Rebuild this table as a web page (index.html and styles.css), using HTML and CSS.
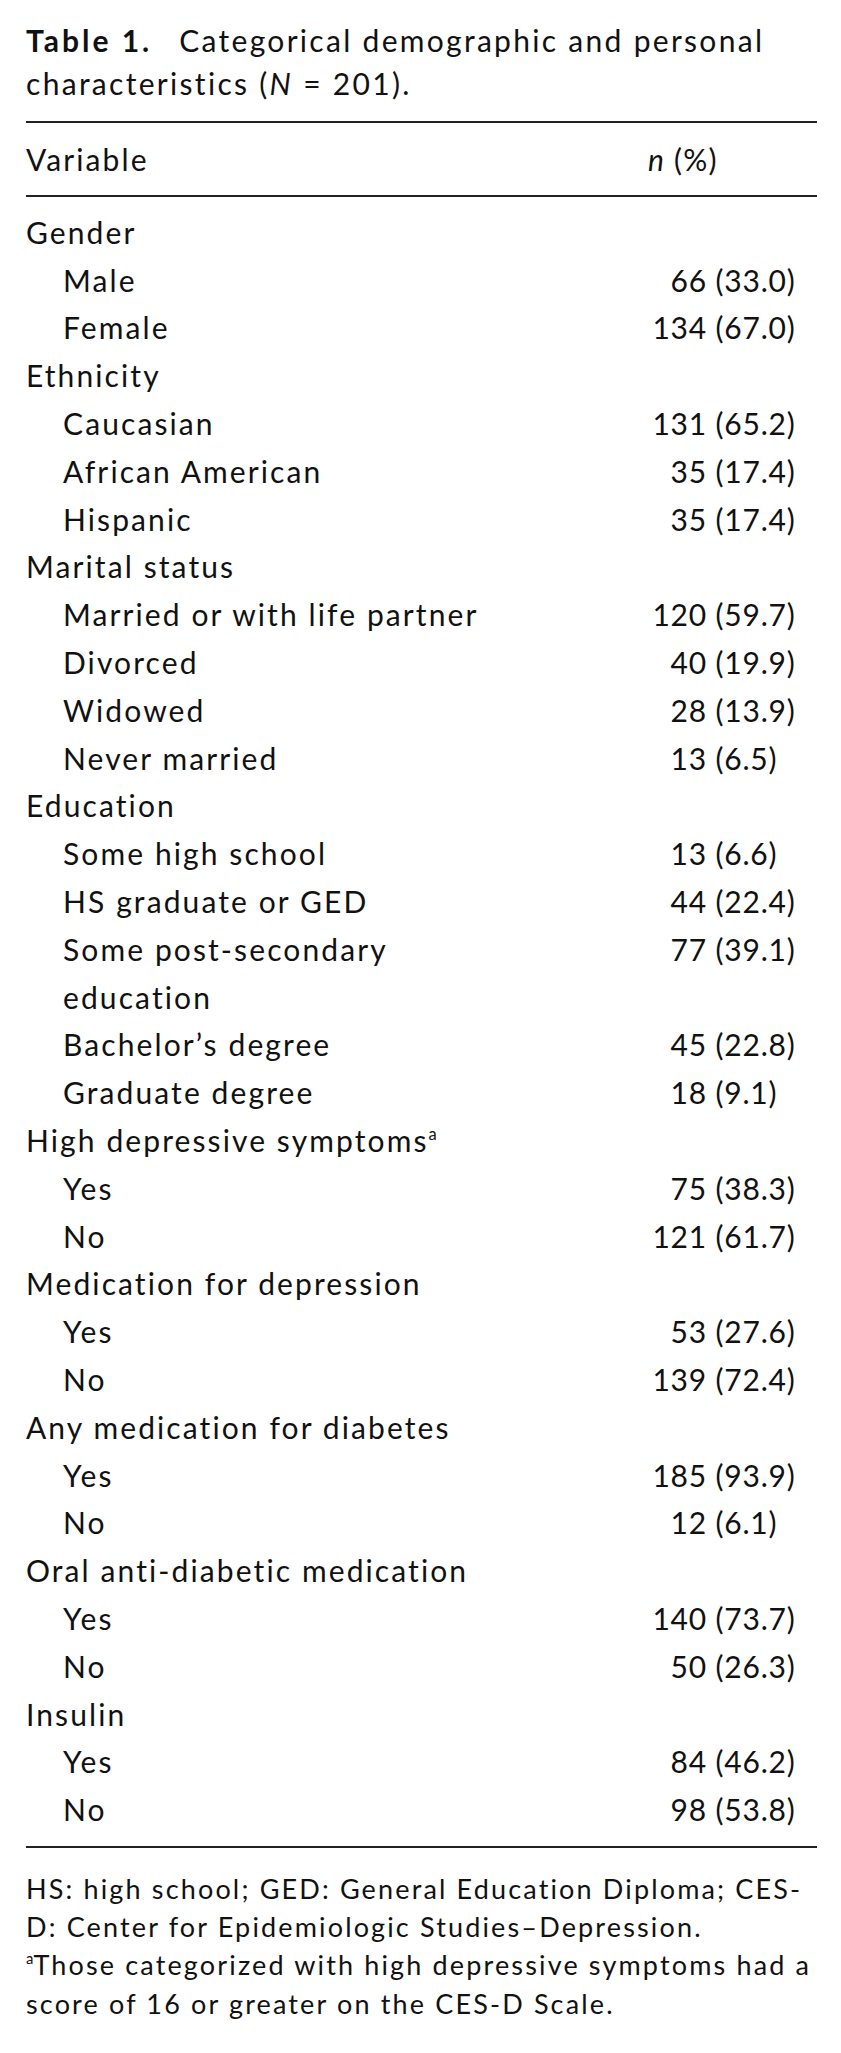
FILE: index.html
```html
<!DOCTYPE html>
<html lang="en">
<head>
<meta charset="utf-8">
<title>Table 1</title>
<link rel="stylesheet" href="styles.css">
</head>
<body>
<main class="page">
  <h1 class="caption"><span class="label">Table 1.</span>&nbsp; Categorical demographic and personal<br>characteristics (<i>N</i> = 201).</h1>
  <table class="data">
    <thead>
      <tr><th class="var">Variable</th><th class="head-val"><i>n</i> (%)</th></tr>
    </thead>
    <tbody>
      <tr><td class="group">Gender</td><td></td></tr>
      <tr><td class="item">Male</td><td class="val"><span class="n">66</span> <span class="pct">(33.0)</span></td></tr>
      <tr><td class="item">Female</td><td class="val"><span class="n">134</span> <span class="pct">(67.0)</span></td></tr>
      <tr><td class="group">Ethnicity</td><td></td></tr>
      <tr><td class="item">Caucasian</td><td class="val"><span class="n">131</span> <span class="pct">(65.2)</span></td></tr>
      <tr><td class="item">African American</td><td class="val"><span class="n">35</span> <span class="pct">(17.4)</span></td></tr>
      <tr><td class="item">Hispanic</td><td class="val"><span class="n">35</span> <span class="pct">(17.4)</span></td></tr>
      <tr><td class="group">Marital status</td><td></td></tr>
      <tr><td class="item">Married or with life partner</td><td class="val"><span class="n">120</span> <span class="pct">(59.7)</span></td></tr>
      <tr><td class="item">Divorced</td><td class="val"><span class="n">40</span> <span class="pct">(19.9)</span></td></tr>
      <tr><td class="item">Widowed</td><td class="val"><span class="n">28</span> <span class="pct">(13.9)</span></td></tr>
      <tr><td class="item">Never married</td><td class="val"><span class="n">13</span> <span class="pct">(6.5)</span></td></tr>
      <tr><td class="group">Education</td><td></td></tr>
      <tr><td class="item">Some high school</td><td class="val"><span class="n">13</span> <span class="pct">(6.6)</span></td></tr>
      <tr><td class="item">HS graduate or GED</td><td class="val"><span class="n">44</span> <span class="pct">(22.4)</span></td></tr>
      <tr><td class="item">Some post-secondary<br>education</td><td class="val"><span class="n">77</span> <span class="pct">(39.1)</span></td></tr>
      <tr><td class="item">Bachelor’s degree</td><td class="val"><span class="n">45</span> <span class="pct">(22.8)</span></td></tr>
      <tr><td class="item">Graduate degree</td><td class="val"><span class="n">18</span> <span class="pct">(9.1)</span></td></tr>
      <tr><td class="group">High depressive symptoms<sup>a</sup></td><td></td></tr>
      <tr><td class="item">Yes</td><td class="val"><span class="n">75</span> <span class="pct">(38.3)</span></td></tr>
      <tr><td class="item">No</td><td class="val"><span class="n">121</span> <span class="pct">(61.7)</span></td></tr>
      <tr><td class="group">Medication for depression</td><td></td></tr>
      <tr><td class="item">Yes</td><td class="val"><span class="n">53</span> <span class="pct">(27.6)</span></td></tr>
      <tr><td class="item">No</td><td class="val"><span class="n">139</span> <span class="pct">(72.4)</span></td></tr>
      <tr><td class="group">Any medication for diabetes</td><td></td></tr>
      <tr><td class="item">Yes</td><td class="val"><span class="n">185</span> <span class="pct">(93.9)</span></td></tr>
      <tr><td class="item">No</td><td class="val"><span class="n">12</span> <span class="pct">(6.1)</span></td></tr>
      <tr><td class="group">Oral anti-diabetic medication</td><td></td></tr>
      <tr><td class="item">Yes</td><td class="val"><span class="n">140</span> <span class="pct">(73.7)</span></td></tr>
      <tr><td class="item">No</td><td class="val"><span class="n">50</span> <span class="pct">(26.3)</span></td></tr>
      <tr><td class="group">Insulin</td><td></td></tr>
      <tr><td class="item">Yes</td><td class="val"><span class="n">84</span> <span class="pct">(46.2)</span></td></tr>
      <tr><td class="item">No</td><td class="val"><span class="n">98</span> <span class="pct">(53.8)</span></td></tr>
    </tbody>
  </table>
  <div class="notes">
    <p>HS: high school; GED: General Education Diploma; CES-<br>D: Center for Epidemiologic Studies–Depression.</p>
    <p><sup>a</sup>Those categorized with high depressive symptoms had a<br>score of 16 or greater on the CES-D Scale.</p>
  </div>
</main>
</body>
</html>
```

FILE: styles.css
```css
html, body {
  margin: 0;
  padding: 0;
  background: #ffffff;
}

body {
  color: #111111;
  font-family: "Lato", "Open Sans", sans-serif;
  font-size: 30px;
  letter-spacing: 2.1px;
}

.page {
  padding: 19px 24px 0 26px;
}

.caption {
  margin: 0;
  font-size: 30px;
  font-weight: 400;
  line-height: 43px;
  letter-spacing: 2.3px;
  white-space: nowrap;
}

.caption .label {
  font-weight: 700;
  letter-spacing: 3px;
  margin-right: 7px;
}

.data {
  width: 100%;
  margin-top: 16px;
  border-collapse: collapse;
  border-top: 2px solid #222222;
  border-bottom: 2px solid #222222;
}

.data thead th {
  font-weight: 400;
  text-align: left;
  line-height: 47.8px;
  padding: 13px 0 11px 0;
  border-bottom: 2px solid #222222;
}

.data .head-val {
  letter-spacing: 1.2px;
  text-indent: -4px;
}

.data td {
  padding: 0;
  line-height: 47.8px;
  vertical-align: top;
}

.data tbody tr:first-child td {
  padding-top: 12px;
}

.data tbody tr:last-child td {
  padding-bottom: 12px;
}

.data .item {
  padding-left: 37px;
}

.data .val,
.data .head-val {
  width: 165px;
  white-space: nowrap;
  text-align: left;
}

.data .val {
  letter-spacing: 0.8px;
}

.val .n {
  display: inline-block;
  width: 55px;
  text-align: right;
}

sup {
  font-size: 0.55em;
  line-height: 0;
  vertical-align: 0.75em;
  letter-spacing: 0;
}

.notes {
  margin-top: 22px;
  font-size: 27px;
  line-height: 38.3px;
  letter-spacing: 2.15px;
  white-space: nowrap;
}

.notes p {
  margin: 0;
}
```
